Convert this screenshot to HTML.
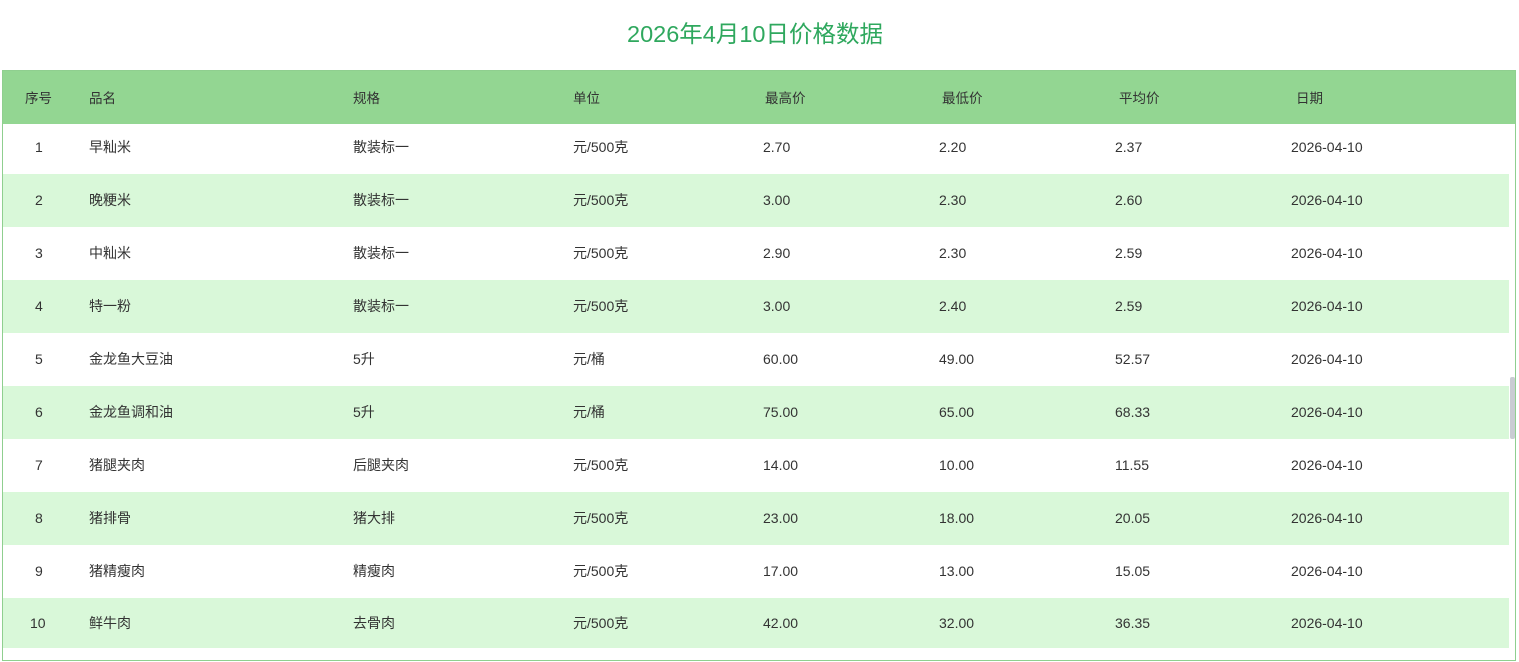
<!DOCTYPE html>
<html><head><meta charset="utf-8"><style>
body{margin:0;background:#fff;font-family:"Liberation Sans","Noto Sans CJK SC",sans-serif;color:#333;width:1519px;height:662px;overflow:hidden;position:relative}
.title{position:absolute;top:18px;left:0;width:1510px;text-align:center;font-size:23.5px;color:#2fa85e;line-height:32px}
.box{position:absolute;left:2px;top:70px;width:1512px;height:589px;border:1px solid #8fcf8f;overflow:hidden}
.hdr{position:absolute;left:0;top:0;width:1512px;height:53px;background:#93d692}
.row{position:absolute;left:0;width:1506px;height:53px}
.row.g{background:#d9f8d9}
.c{position:absolute;top:0;line-height:53px;font-size:14px;white-space:nowrap}
.hdr .c{line-height:55px;font-size:13.5px}
.sb{position:absolute;left:1507px;top:306px;width:5px;height:62px;background:#c9ccd3;border-radius:2px}
</style></head><body>
<div class="title">2026年4月10日价格数据</div>
<div class="box">
<div class="hdr">
<span class="c" style="left:22px">序号</span><span class="c" style="left:86px">品名</span><span class="c" style="left:350px">规格</span><span class="c" style="left:570px">单位</span><span class="c" style="left:762px">最高价</span><span class="c" style="left:939px">最低价</span><span class="c" style="left:1116px">平均价</span><span class="c" style="left:1293px">日期</span>
</div>
<div class="row" style="top:50px"><span class="c" style="left:32px">1</span><span class="c" style="left:86px">早籼米</span><span class="c" style="left:350px">散装标一</span><span class="c" style="left:570px">元/500克</span><span class="c" style="left:760px">2.70</span><span class="c" style="left:936px">2.20</span><span class="c" style="left:1112px">2.37</span><span class="c" style="left:1288px">2026-04-10</span></div>
<div class="row g" style="top:103px"><span class="c" style="left:32px">2</span><span class="c" style="left:86px">晚粳米</span><span class="c" style="left:350px">散装标一</span><span class="c" style="left:570px">元/500克</span><span class="c" style="left:760px">3.00</span><span class="c" style="left:936px">2.30</span><span class="c" style="left:1112px">2.60</span><span class="c" style="left:1288px">2026-04-10</span></div>
<div class="row" style="top:156px"><span class="c" style="left:32px">3</span><span class="c" style="left:86px">中籼米</span><span class="c" style="left:350px">散装标一</span><span class="c" style="left:570px">元/500克</span><span class="c" style="left:760px">2.90</span><span class="c" style="left:936px">2.30</span><span class="c" style="left:1112px">2.59</span><span class="c" style="left:1288px">2026-04-10</span></div>
<div class="row g" style="top:209px"><span class="c" style="left:32px">4</span><span class="c" style="left:86px">特一粉</span><span class="c" style="left:350px">散装标一</span><span class="c" style="left:570px">元/500克</span><span class="c" style="left:760px">3.00</span><span class="c" style="left:936px">2.40</span><span class="c" style="left:1112px">2.59</span><span class="c" style="left:1288px">2026-04-10</span></div>
<div class="row" style="top:262px"><span class="c" style="left:32px">5</span><span class="c" style="left:86px">金龙鱼大豆油</span><span class="c" style="left:350px">5升</span><span class="c" style="left:570px">元/桶</span><span class="c" style="left:760px">60.00</span><span class="c" style="left:936px">49.00</span><span class="c" style="left:1112px">52.57</span><span class="c" style="left:1288px">2026-04-10</span></div>
<div class="row g" style="top:315px"><span class="c" style="left:32px">6</span><span class="c" style="left:86px">金龙鱼调和油</span><span class="c" style="left:350px">5升</span><span class="c" style="left:570px">元/桶</span><span class="c" style="left:760px">75.00</span><span class="c" style="left:936px">65.00</span><span class="c" style="left:1112px">68.33</span><span class="c" style="left:1288px">2026-04-10</span></div>
<div class="row" style="top:368px"><span class="c" style="left:32px">7</span><span class="c" style="left:86px">猪腿夹肉</span><span class="c" style="left:350px">后腿夹肉</span><span class="c" style="left:570px">元/500克</span><span class="c" style="left:760px">14.00</span><span class="c" style="left:936px">10.00</span><span class="c" style="left:1112px">11.55</span><span class="c" style="left:1288px">2026-04-10</span></div>
<div class="row g" style="top:421px"><span class="c" style="left:32px">8</span><span class="c" style="left:86px">猪排骨</span><span class="c" style="left:350px">猪大排</span><span class="c" style="left:570px">元/500克</span><span class="c" style="left:760px">23.00</span><span class="c" style="left:936px">18.00</span><span class="c" style="left:1112px">20.05</span><span class="c" style="left:1288px">2026-04-10</span></div>
<div class="row" style="top:474px"><span class="c" style="left:32px">9</span><span class="c" style="left:86px">猪精瘦肉</span><span class="c" style="left:350px">精瘦肉</span><span class="c" style="left:570px">元/500克</span><span class="c" style="left:760px">17.00</span><span class="c" style="left:936px">13.00</span><span class="c" style="left:1112px">15.05</span><span class="c" style="left:1288px">2026-04-10</span></div>
<div class="row g" style="top:527px;height:50px"><span class="c" style="left:27px;line-height:50px">10</span><span class="c" style="left:86px;line-height:50px">鲜牛肉</span><span class="c" style="left:350px;line-height:50px">去骨肉</span><span class="c" style="left:570px;line-height:50px">元/500克</span><span class="c" style="left:760px;line-height:50px">42.00</span><span class="c" style="left:936px;line-height:50px">32.00</span><span class="c" style="left:1112px;line-height:50px">36.35</span><span class="c" style="left:1288px;line-height:50px">2026-04-10</span></div>
<div class="sb"></div>
</div>
</body></html>
